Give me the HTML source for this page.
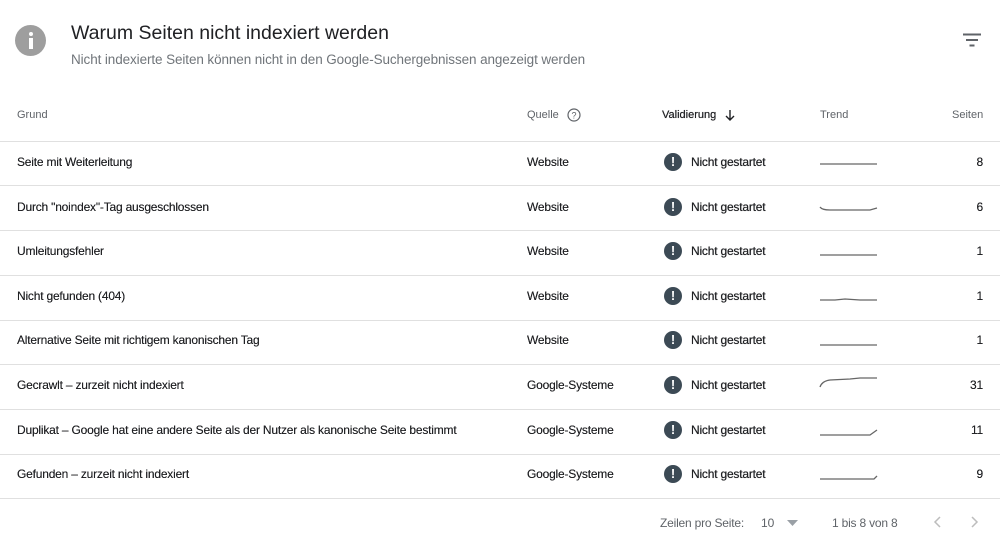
<!DOCTYPE html>
<html><head><meta charset="utf-8"><style>
body{margin:0;width:1000px;height:541px;background:#fff;font-family:"Liberation Sans",sans-serif;position:relative;overflow:hidden;color:#202124}
.a{position:absolute;white-space:nowrap}
.line{position:absolute;left:0;width:1000px;height:1px;background:#e0e0e0}
.h{font-size:11px;color:#5f6368;top:109px}
.c{font-size:12px;letter-spacing:-0.2px;text-shadow:0 0 0.3px #202124}
.ic{position:absolute;width:18px;height:18px;border-radius:50%;background:#3c4a55;color:#fff;font-size:13px;font-weight:bold;text-align:center;line-height:18px}
.ns{font-size:12px;letter-spacing:-0.2px;text-shadow:0 0 0.5px #202124}
</style></head><body>
<div class="a" style="left:15px;top:25px;width:31px;height:31px;border-radius:50%;background:#9e9e9e"></div>
<div class="a" style="left:29px;top:32px;width:4px;height:4px;border-radius:2px;background:#fff"></div>
<div class="a" style="left:29px;top:38px;width:4px;height:11px;background:#fff"></div>
<div class="a" style="left:71px;top:22px;font-size:19.5px;color:#202124">Warum Seiten nicht indexiert werden</div>
<div class="a" style="left:71px;top:52px;font-size:13.5px;color:#70757a;letter-spacing:-0.1px">Nicht indexierte Seiten können nicht in den Google-Suchergebnissen angezeigt werden</div>
<svg class="a" style="left:963px;top:33px" width="18" height="14"><path d="M0 1.5h18M3 7h12M6.5 12.5h5" stroke="#5f6368" stroke-width="2"/></svg>
<div class="a h" style="left:17px">Grund</div>
<div class="a h" style="left:527px">Quelle</div>
<svg class="a" style="left:567px;top:108px" width="14" height="14"><circle cx="7" cy="7" r="6" fill="none" stroke="#5f6368" stroke-width="1.2"/><text x="7" y="10.5" font-size="9" text-anchor="middle" fill="#5f6368" font-family="Liberation Sans">?</text></svg>
<div class="a h" style="left:662px;color:#202124;font-size:11px;text-shadow:0 0 0.5px #202124">Validierung</div>
<svg class="a" style="left:724px;top:109px" width="12" height="13"><path d="M6 1v10M2 7l4 4 4-4" stroke="#202124" stroke-width="1.4" fill="none"/></svg>
<div class="a h" style="left:820px">Trend</div>
<div class="a h" style="left:952px">Seiten</div>
<div class="line" style="top:141px"></div>
<div class="line" style="top:185px"></div>
<div class="line" style="top:230px"></div>
<div class="line" style="top:275px"></div>
<div class="line" style="top:320px"></div>
<div class="line" style="top:364px"></div>
<div class="line" style="top:409px"></div>
<div class="line" style="top:454px"></div>
<div class="line" style="top:498px"></div>

<div class="a c" style="left:17px;top:155px">Seite mit Weiterleitung</div>
<div class="a c" style="left:17px;top:200px">Durch "noindex"-Tag ausgeschlossen</div>
<div class="a c" style="left:17px;top:244px">Umleitungsfehler</div>
<div class="a c" style="left:17px;top:289px">Nicht gefunden (404)</div>
<div class="a c" style="left:17px;top:333px">Alternative Seite mit richtigem kanonischen Tag</div>
<div class="a c" style="left:17px;top:378px">Gecrawlt – zurzeit nicht indexiert</div>
<div class="a c" style="left:17px;top:423px">Duplikat – Google hat eine andere Seite als der Nutzer als kanonische Seite bestimmt</div>
<div class="a c" style="left:17px;top:467px">Gefunden – zurzeit nicht indexiert</div>

<div class="a c" style="left:527px;top:155px">Website</div>
<div class="a c" style="left:527px;top:200px">Website</div>
<div class="a c" style="left:527px;top:244px">Website</div>
<div class="a c" style="left:527px;top:289px">Website</div>
<div class="a c" style="left:527px;top:333px">Website</div>
<div class="a c" style="left:527px;top:378px">Google-Systeme</div>
<div class="a c" style="left:527px;top:423px">Google-Systeme</div>
<div class="a c" style="left:527px;top:467px">Google-Systeme</div>

<div class="ic" style="left:664px;top:153px">!</div><div class="a ns" style="left:691px;top:155px">Nicht gestartet</div>
<div class="ic" style="left:664px;top:198px">!</div><div class="a ns" style="left:691px;top:200px">Nicht gestartet</div>
<div class="ic" style="left:664px;top:242px">!</div><div class="a ns" style="left:691px;top:244px">Nicht gestartet</div>
<div class="ic" style="left:664px;top:287px">!</div><div class="a ns" style="left:691px;top:289px">Nicht gestartet</div>
<div class="ic" style="left:664px;top:331px">!</div><div class="a ns" style="left:691px;top:333px">Nicht gestartet</div>
<div class="ic" style="left:664px;top:376px">!</div><div class="a ns" style="left:691px;top:378px">Nicht gestartet</div>
<div class="ic" style="left:664px;top:421px">!</div><div class="a ns" style="left:691px;top:423px">Nicht gestartet</div>
<div class="ic" style="left:664px;top:465px">!</div><div class="a ns" style="left:691px;top:467px">Nicht gestartet</div>

<svg class="a" style="left:0;top:0" width="1000" height="541" fill="none" stroke="#666" stroke-width="1.3">
<path d="M820 164H877"/>
<path d="M820 207Q822 210 830 210H870L877 208"/>
<path d="M820 255H877"/>
<path d="M820 300L835 300L845 299L860 300H877"/>
<path d="M820 345H877"/>
<path d="M820 387Q822 381 830 380L850 379L860 378H877"/>
<path d="M820 435H870L877 430"/>
<path d="M820 479H874L877 476"/>
</svg>

<div class="a c" style="right:17px;top:155px">8</div>
<div class="a c" style="right:17px;top:200px">6</div>
<div class="a c" style="right:17px;top:244px">1</div>
<div class="a c" style="right:17px;top:289px">1</div>
<div class="a c" style="right:17px;top:333px">1</div>
<div class="a c" style="right:17px;top:378px">31</div>
<div class="a c" style="right:17px;top:423px">11</div>
<div class="a c" style="right:17px;top:467px">9</div>

<div class="a" style="left:660px;top:516px;font-size:12px;color:#5f6368;letter-spacing:-0.2px">Zeilen pro Seite:</div>
<div class="a" style="left:761px;top:516px;font-size:12px;color:#5f6368">10</div>
<svg class="a" style="left:787px;top:520px" width="11" height="6"><path d="M0 0h11L5.5 6z" fill="#9aa0a6"/></svg>
<div class="a" style="left:832px;top:516px;font-size:12px;color:#5f6368;letter-spacing:-0.2px">1 bis 8 von 8</div>
<svg class="a" style="left:930px;top:514px" width="50" height="16" fill="none" stroke="#bdbdbd" stroke-width="1.5"><path d="M10 3L5 8l5 5M42 3l5 5-5 5"/></svg>
</body></html>
